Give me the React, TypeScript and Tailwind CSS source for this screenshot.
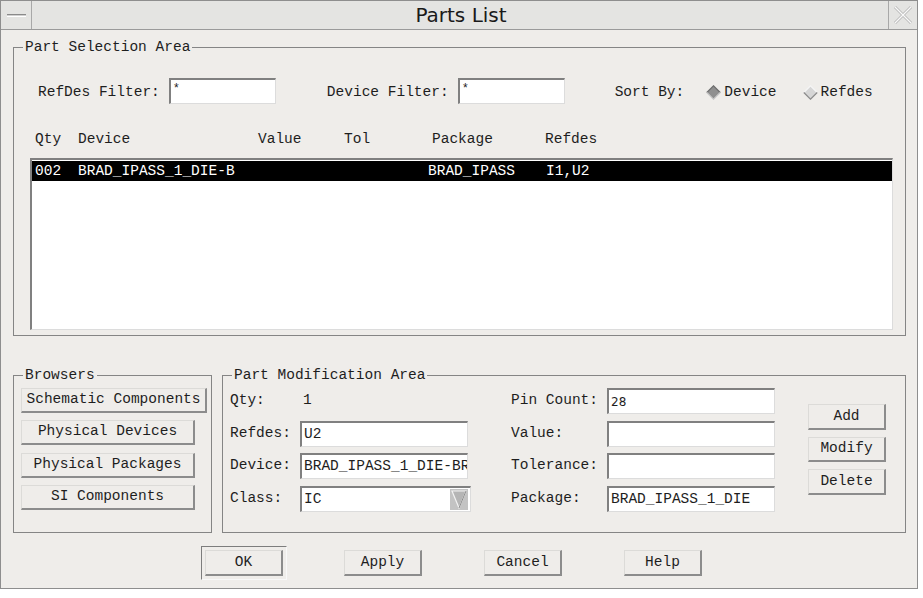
import React from "react";

const MONO = "font-['Liberation_Mono','DejaVu_Sans_Mono',monospace] text-[14.5px] text-[#1e1e1e]";

function Field({ className = "", children }: { className?: string; children?: React.ReactNode }) {
  return (
    <div
      className={`h-[26px] bg-white border-t-2 border-l-2 border-t-[#808080] border-l-[#808080] border-b border-r border-b-[#dcdcdc] border-r-[#dcdcdc] flex items-center pl-[2px] overflow-hidden whitespace-nowrap ${className}`}
    >
      {children}
    </div>
  );
}

function Btn({ className = "", children }: { className?: string; children?: React.ReactNode }) {
  return (
    <div
      className={`flex items-center justify-center whitespace-nowrap border-t border-l border-t-[#dcdbd8] border-l-[#dcdbd8] border-r-2 border-b-2 border-r-[#8c8c8c] border-b-[#8c8c8c] ${className}`}
    >
      {children}
    </div>
  );
}

function Group({ label, className = "", children }: { label: string; className?: string; children?: React.ReactNode }) {
  return (
    <div className={`relative border border-[#858585] ${className}`}>
      <span className="absolute -top-[9px] left-[9px] px-[2px] bg-[#efedea] leading-[16px]">{label}</span>
      {children}
    </div>
  );
}

function Diamond({ on }: { on: boolean }) {
  return (
    <svg width="15" height="15" viewBox="0 0 15 15">
      <polygon points="7.5,0.5 14.5,7.5 7.5,14.5 0.5,7.5" fill={on ? "#8f8f8f" : "#d6d6d6"} />
      <polyline points="0.8,7.5 7.5,0.8 14.2,7.5" fill="none" stroke={on ? "#707070" : "#f6f6f6"} strokeWidth="1.2" />
      <polyline points="0.8,7.5 7.5,14.2 14.2,7.5" fill="none" stroke={on ? "#c9c9c9" : "#8c8c8c"} strokeWidth="1.2" />
    </svg>
  );
}

export default function App() {
  return (
    <div className={`w-[923px] h-[598px] bg-white ${MONO}`}>
      <div className="w-[918px] h-[589px] bg-[#efedea] border border-[#8e8e8e] flex flex-col">
        {/* Title bar */}
        <div className="h-[29px] flex items-stretch bg-[#e4e4e2] border-b border-[#9a9a9a]">
          <div className="w-[31px] border-r border-[#a8a8a8] flex items-center justify-center">
            <div className="w-[19px] h-[3px] border-t border-t-[#8a8a8a] border-b border-b-white bg-[#d0d0d0]" />
          </div>
          <div className="flex-1 flex items-center justify-center font-['DejaVu_Sans',sans-serif] text-[20px] text-[#1a1a1a] pl-[2px]">
            Parts List
          </div>
          <div className="w-[29px] border-l border-[#a8a8a8] flex items-center justify-center">
            <svg width="22" height="22" viewBox="0 0 22 22">
              <path d="M3 3 L19 19 M19 3 L3 19" stroke="#b8b8b8" strokeWidth="3" />
              <path d="M3 3 L19 19 M19 3 L3 19" stroke="#fafafa" strokeWidth="1.2" />
            </svg>
          </div>
        </div>

        {/* Body */}
        <div className="flex-1 flex flex-col pl-[12px] pr-[11px]">
          <Group label="Part Selection Area" className="mt-[17px] h-[289px] flex flex-col">
            <div className="mt-[30px] h-[26px] flex items-center pl-[24px]">
              <span className="pt-[3px]">RefDes Filter:</span>
              <Field className="ml-[9px] w-[107px]">
                <span className="text-[12px] leading-[12px] self-start mt-[3px]">*</span>
              </Field>
              <span className="ml-[51px] pt-[3px]">Device Filter:</span>
              <Field className="ml-[9px] w-[107px]">
                <span className="text-[12px] leading-[12px] self-start mt-[3px]">*</span>
              </Field>
              <span className="ml-[50px] pt-[3px]">Sort By:</span>
              <span className="ml-[22px] flex items-center pt-[3px]">
                <Diamond on={true} />
              </span>
              <span className="ml-[3px] pt-[3px]">Device</span>
              <span className="ml-[26px] flex items-center pt-[3px]">
                <Diamond on={false} />
              </span>
              <span className="ml-[3px] pt-[3px]">Refdes</span>
            </div>
            <div className="mt-[26px] h-[20px] flex items-center pl-[21px] whitespace-nowrap">
              <span className="w-[43px]">Qty</span>
              <span className="w-[180px]">Device</span>
              <span className="w-[86px]">Value</span>
              <span className="w-[88px]">Tol</span>
              <span className="w-[113px]">Package</span>
              <span>Refdes</span>
            </div>
            <div className="mt-[8px] ml-[16px] mr-[12px] h-[172px] bg-white border-t-2 border-l-2 border-t-[#808080] border-l-[#808080] border-b border-r border-b-[#dcdcdc] border-r-[#dcdcdc] pt-[1px]">
              <div className="h-[20px] bg-black text-white flex items-center pl-[3px] pt-[2px] whitespace-nowrap">
                <span className="w-[43px]">002</span>
                <span className="w-[350px]">BRAD_IPASS_1_DIE-B</span>
                <span className="w-[118px]">BRAD_IPASS</span>
                <span>I1,U2</span>
              </div>
            </div>
          </Group>

          <div className="mt-[39px] h-[158px] flex gap-[10px]">
            <Group label="Browsers" className="w-[199px] flex flex-col pl-[7px] pt-[12px]">
              <Btn className="w-[186px] h-[25px]">Schematic Components</Btn>
              <Btn className="mt-[7px] w-[174px] h-[25px]">Physical Devices</Btn>
              <Btn className="mt-[8px] w-[174px] h-[25px]">Physical Packages</Btn>
              <Btn className="mt-[7px] w-[174px] h-[25px]">SI Components</Btn>
            </Group>

            <Group label="Part Modification Area" className="flex-1 flex pl-[7px] pt-[12px]">
              <div className="flex flex-col">
                <div className="h-[26px] flex items-center">
                  <span className="w-[70px]">Qty:</span>
                  <span className="pl-[3px]">1</span>
                </div>
                <div className="mt-[7px] h-[26px] flex items-center">
                  <span className="w-[70px]">Refdes:</span>
                  <Field className="w-[168px]">U2</Field>
                </div>
                <div className="mt-[6px] h-[26px] flex items-center">
                  <span className="w-[70px]">Device:</span>
                  <Field className="w-[168px]">BRAD_IPASS_1_DIE-BRAD</Field>
                </div>
                <div className="mt-[7px] h-[26px] flex items-center">
                  <span className="w-[70px]">Class:</span>
                  <Field className="w-[171px] justify-between pr-[2px]">
                    <span>IC</span>
                    <svg width="18" height="21" viewBox="0 0 18 21">
                      <rect x="0" y="0" width="18" height="21" fill="#c3c3c3" />
                      <polygon points="2,2 16,2 9,19" fill="#b5b5b5" stroke="#f2f2f2" strokeWidth="1.2" />
                      <line x1="16" y1="2" x2="9" y2="19" stroke="#8a8a8a" strokeWidth="1" />
                    </svg>
                  </Field>
                </div>
              </div>

              <div className="flex flex-col ml-[40px]">
                <div className="h-[26px] flex items-center">
                  <span className="w-[96px]">Pin Count:</span>
                  <Field className="w-[168px]">
                    <span className="font-['DejaVu_Sans',sans-serif] text-[12px]">28</span>
                  </Field>
                </div>
                <div className="mt-[7px] h-[26px] flex items-center">
                  <span className="w-[96px]">Value:</span>
                  <Field className="w-[168px]" />
                </div>
                <div className="mt-[6px] h-[26px] flex items-center">
                  <span className="w-[96px]">Tolerance:</span>
                  <Field className="w-[168px]" />
                </div>
                <div className="mt-[7px] h-[26px] flex items-center">
                  <span className="w-[96px]">Package:</span>
                  <Field className="w-[168px]">BRAD_IPASS_1_DIE</Field>
                </div>
              </div>

              <div className="flex flex-col ml-[33px] pt-[16px]">
                <Btn className="w-[78px] h-[26px]">Add</Btn>
                <Btn className="mt-[7px] w-[78px] h-[25px]">Modify</Btn>
                <Btn className="mt-[7px] w-[78px] h-[26px]">Delete</Btn>
              </div>
            </Group>
          </div>

          <div className="mt-[13px] flex items-start pl-[188px]">
            <div className="border-t border-l border-t-[#7d7d7d] border-l-[#7d7d7d] border-r border-b border-r-[#f8f8f8] border-b-[#f8f8f8] p-[3px]">
              <Btn className="w-[78px] h-[26px]">OK</Btn>
            </div>
            <Btn className="mt-[4px] ml-[57px] w-[78px] h-[26px]">Apply</Btn>
            <Btn className="mt-[4px] ml-[62px] w-[78px] h-[26px]">Cancel</Btn>
            <Btn className="mt-[4px] ml-[62px] w-[78px] h-[26px]">Help</Btn>
          </div>
        </div>
      </div>
    </div>
  );
}
